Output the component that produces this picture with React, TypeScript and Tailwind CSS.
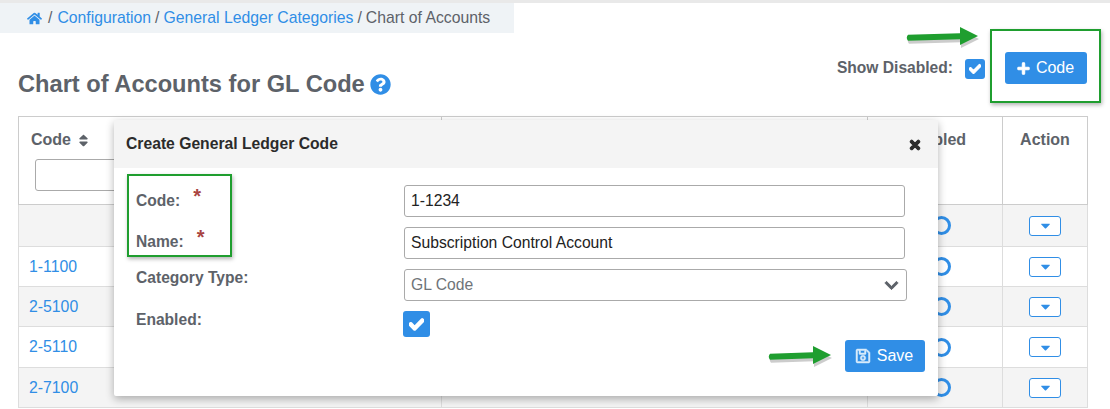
import React from "react";
import { FaHome, FaPlus, FaCheck, FaTimes, FaChevronDown, FaQuestionCircle, FaSort, FaCaretDown, FaRegSave } from "react-icons/fa";

const rows = [
  { code: "", h: "h-[42px]", bg: "bg-[#f4f4f4]" },
  { code: "1-1100", h: "h-[40px]", bg: "bg-white" },
  { code: "2-5100", h: "h-[40px]", bg: "bg-[#f4f4f4]" },
  { code: "2-5110", h: "h-[41px]", bg: "bg-white" },
  { code: "2-7100", h: "h-[40px]", bg: "bg-[#f4f4f4]" },
];

function Check({ box, icon }: { box: string; icon: number }) {
  return (
    <span className={`flex items-center justify-center rounded-[3px] bg-[#308ee6] text-white ${box}`}>
      <FaCheck size={icon} stroke="currentColor" strokeWidth={50} />
    </span>
  );
}

function Arrow({ className, w }: { className: string; w: number }) {
  const h = w - 19;
  const shaft = `M3 8.7 Q0.5 11.7 3 14.7 L${h} 13.3 L${h} 19 L${w - 1} 10 L${h} 1 L${h} 7.3 Z`;
  return (
    <svg className={className} width={w + 2} height="26" viewBox={`0 0 ${w + 2} 26`}>
      <path d={shaft} fill="#000" opacity="0.2" transform="translate(1,3)" />
      <path d={shaft} fill="#1f9e2f" />
    </svg>
  );
}

function Label({ text, pad, star }: { text: string; pad: string; star?: string }) {
  return (
    <div className={`text-[15.6px] leading-[17px] font-bold text-[#5d6269] ${pad}`}>
      {text}
      {star && <span className={`relative -top-[3px] text-[20px] leading-[0] font-bold text-[#a94442] ${star}`}>*</span>}
    </div>
  );
}

export default function App() {
  return (
    <div className="relative h-[409px] w-[1110px] overflow-hidden bg-white font-['Liberation_Sans',Arial,sans-serif] text-[16px]">
      <div className="h-[3px] bg-[#e9e9e9]" />
      <nav className="flex h-[30px] w-[514px] items-center bg-[#eff3f6] pl-[27px] text-[15.75px] text-[#5d6269]">
        <FaHome size={15} className="text-[#308ee6]" />
        <span className="ml-[6px]">/</span>
        <a className="ml-[5px] text-[#308ee6]">Configuration</a>
        <span className="mx-[4px]">/</span>
        <a className="text-[#308ee6]">General Ledger Categories</a>
        <span className="mx-[4px]">/</span>
        <span>Chart of Accounts</span>
      </nav>

      <div className="flex h-[83px] items-start justify-between pl-[18px] pr-[23px]">
        <h1 className="mt-[37px] flex items-center text-[23.65px] leading-[28px] font-bold text-[#5d6269]">
          Chart of Accounts for GL Code
          <FaQuestionCircle size={21} className="ml-[5px] text-[#308ee6]" />
        </h1>
        <div className="mt-[19px] flex items-center">
          <span className="text-[15.6px] font-bold text-[#5d6269]">Show Disabled:</span>
          <Check box="ml-[12px] h-[20px] w-[20px] mt-[2px]" icon={12} />
          <button className="ml-[20px] flex h-[32px] w-[82px] items-center justify-center rounded-[3px] bg-[#308ee6] text-[16px] text-white">
            <FaPlus size={13} stroke="currentColor" strokeWidth={40} className="mr-[6px] -ml-[1px]" />
            Code
          </button>
        </div>
      </div>

      <table className="ml-[18px] w-[1069px] table-fixed border-collapse">
        <colgroup>
          <col className="w-[423px]" />
          <col className="w-[426px]" />
          <col className="w-[135px]" />
          <col className="w-[85px]" />
        </colgroup>
        <thead>
          <tr className="h-[88px] align-top font-bold text-[#5d6269]">
            <th className="border border-[#cccccc] pl-[12px] pr-[12px] pt-[13px] text-left">
              <div className="flex items-center text-[16px] leading-[20px]">
                Code
                <FaSort size={15} className="ml-[5px]" />
              </div>
              <input className="mt-[9px] ml-[4px] block h-[32px] w-[300px] rounded-[3px] border border-[#aaaaaa] bg-white" />
            </th>
            <th className="border border-[#cccccc]" />
            <th className="border border-[#cccccc] pt-[13px] text-center text-[16px] leading-[20px]">Enabled</th>
            <th className="border border-[#cccccc] pt-[13px] text-center text-[16px] leading-[20px]">Action</th>
          </tr>
        </thead>
        <tbody>
          {rows.map((r, i) => (
            <tr key={i} className={`${r.h} ${r.bg}`}>
              <td className="border border-[#dddddd] pl-[10px] text-[15.8px] text-[#308ee6]">{r.code}</td>
              <td className="border border-[#dddddd]" />
              <td className="border border-[#dddddd]">
                <span className="ml-[64px] block h-[19px] w-[19px] rounded-full border-[3px] border-[#308ee6]" />
              </td>
              <td className="border border-[#dddddd]">
                <button className="mx-auto flex h-[20px] w-[32px] items-center justify-center rounded-[3px] border border-[#308ee6] bg-white text-[#308ee6]">
                  <FaCaretDown size={15} />
                </button>
              </td>
            </tr>
          ))}
        </tbody>
      </table>

      <div className="absolute left-[114px] top-[120px] h-[276px] w-[824px] rounded-[2px] bg-white shadow-[0_3px_8px_rgba(0,0,0,0.3)]">
        <div className="flex h-[48px] items-center justify-between bg-[#f4f4f4] pl-[12px] pr-[16px]">
          <span className="text-[15.7px] font-bold text-[#2b2b2b]">Create General Ledger Code</span>
          <FaTimes size={14} stroke="currentColor" strokeWidth={40} className="mt-[2px] text-[#2b2b2b]" />
        </div>
        <div className="px-[22px] pt-[17px]">
          <div className="grid grid-cols-[268px_1fr] auto-rows-[42px]">
            <Label text="Code:" pad="pt-[7px]" star="ml-[13px]" />
            <input readOnly value="1-1234" className="h-[32px] w-[501px] rounded-[3px] border border-[#aaaaaa] px-[6px] text-[15.7px] text-[#222222] outline-none" />
            <Label text="Name:" pad="pt-[6px]" star="ml-[13px]" />
            <input readOnly value="Subscription Control Account" className="h-[32px] w-[501px] rounded-[3px] border border-[#aaaaaa] px-[6px] text-[15.7px] text-[#222222] outline-none" />
            <Label text="Category Type:" pad="" />
            <div className="flex h-[32px] w-[503px] items-center justify-between rounded-[3px] border border-[#aaaaaa] px-[6px] text-[15.7px] text-[#6f7479]">
              GL Code
              <FaChevronDown size={15} stroke="currentColor" strokeWidth={30} className="mr-[1px] text-[#5d6269]" />
            </div>
            <Label text="Enabled:" pad="" />
            <Check box="-ml-[1px] h-[26px] w-[27px]" icon={15} />
          </div>
          <div className="-mt-[13px] flex justify-end">
            <button className="mr-[-9px] flex h-[32px] w-[80px] items-center justify-center rounded-[3px] bg-[#308ee6] text-[16px] text-white">
              <FaRegSave size={16} stroke="currentColor" strokeWidth={15} className="mr-[6px] -ml-[2px] text-[#d9ebfb]" />
              Save
            </button>
          </div>
        </div>
      </div>

      <div className="absolute left-[990px] top-[29px] h-[74px] w-[111px] border-2 border-[#1f9e2f] shadow-[1px_2px_4px_rgba(0,0,0,0.3)]" />
      <div className="absolute left-[127px] top-[174px] h-[83px] w-[105px] border-2 border-[#1f9e2f] shadow-[1px_2px_4px_rgba(0,0,0,0.3)]" />
      <Arrow className="absolute left-[905px] top-[26px]" w={74} />
      <Arrow className="absolute left-[767px] top-[345px]" w={65} />
    </div>
  );
}
